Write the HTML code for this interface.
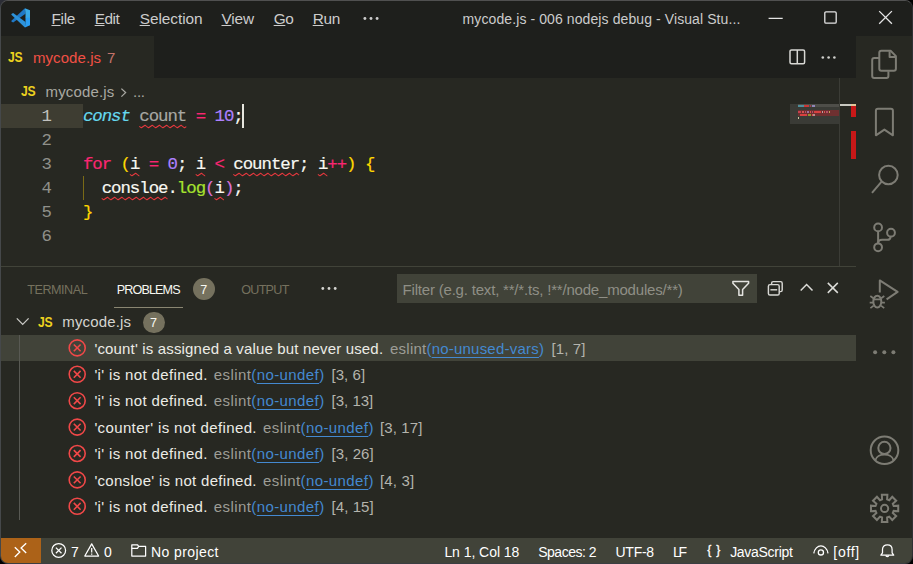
<!DOCTYPE html>
<html lang="en">
<head>
<meta charset="utf-8">
<title>mycode.js - 006 nodejs debug - Visual Studio Code</title>
<style>
html,body{margin:0;padding:0;}
body{width:913px;height:564px;overflow:hidden;background:#000;position:relative;font-family:"Liberation Sans",sans-serif;}
#cornerTL{position:absolute;left:0;top:0;width:10px;height:10px;background:#2b2d35;}
#win{position:absolute;left:0;top:0;width:911px;height:562px;border:1px solid #3a3e42;border-top-color:#505050;border-left-color:#45484a;border-right-color:#2f3034;border-radius:8px;overflow:hidden;background:#272822;}
.abs{position:absolute;}
.t{position:absolute;white-space:pre;line-height:20px;font-family:"Liberation Sans",sans-serif;}
.t u{text-decoration:underline;text-underline-offset:1px;text-decoration-thickness:1px;}
.t span u{text-underline-offset:3.4px;text-decoration-thickness:1.2px;}
svg{position:absolute;overflow:visible;}
.code{position:absolute;left:82.9px;white-space:pre;font-family:"Liberation Mono",monospace;font-size:17.4px;letter-spacing:-1.04px;line-height:24px;height:24px;color:#f8f8f2;-webkit-text-stroke:0.18px currentColor;}
.ln{position:absolute;left:20px;width:30.8px;text-align:right;white-space:pre;font-family:"Liberation Mono",monospace;font-size:17.4px;letter-spacing:-1.04px;line-height:24px;height:24px;color:#90908a;}
.k{color:#f92672}.y{color:#ffd700}.p{color:#ae81ff}.g{color:#a6e22e}.m{color:#da70d6}.c{color:#66d9ef;font-style:italic}.f{color:#a7a7a3}
.js{font-size:14px;font-weight:bold;color:#ecd21f;transform:scaleX(0.87);transform-origin:0 0;letter-spacing:-0.2px;}
</style>
</head>
<body>
<div id="cornerTL"></div>
<div id="win">
<!-- offsets inside #win are page coords minus 1 -->
<div class="abs" id="page" style="left:-1px;top:-1px;width:913px;height:564px;">

<!-- title bar -->
<div class="abs" style="left:0;top:0;width:913px;height:36px;background:#1e1f1c;"></div>
<!-- tabs container -->
<div class="abs" style="left:0;top:36px;width:856px;height:42px;background:#1e1f1c;"></div>
<div class="abs" style="left:0;top:36px;width:154px;height:42px;background:#272822;"></div>
<!-- editor bg is default -->
<!-- line highlight (gutter) -->
<div class="abs" style="left:0;top:104px;width:83px;height:24px;background:#3e3d32;"></div>

<!-- VS Code logo -->
<svg style="left:10.7px;top:7.7px;" width="19.6" height="19.6" viewBox="0 0 100 100">
  <path d="M2 65 L71 1 L74 29 L11 74 L2 69 Z" fill="#1f78c6"/>
  <path d="M2 31 L11 26 L74 71 L71 99 L2 35 Z" fill="#2d92da"/>
  <path d="M71 1 L97 12 L97 51 L74 51 L74 29 Z" fill="#39a9e6"/>
  <path d="M74 50 L97 50 L97 88 L71 99 L74 71 Z" fill="#2a9df2"/>
</svg>

<!-- menu dots -->
<svg style="left:363px;top:16px;" width="16" height="5" viewBox="0 0 16 5"><circle cx="1.9" cy="2.5" r="1.45" fill="#ccc"/><circle cx="8" cy="2.5" r="1.45" fill="#ccc"/><circle cx="14.1" cy="2.5" r="1.45" fill="#ccc"/></svg>

<!-- window controls -->
<svg style="left:768px;top:10px;" width="130" height="16" viewBox="0 0 130 16" fill="none" stroke="#e4e4e4" stroke-width="1.3">
  <path d="M0.6 8.3 H14.7"/>
  <rect x="56.8" y="1.9" width="11.4" height="11.3" rx="1.2"/>
  <path d="M111.2 1.1 L123.9 13.8 M123.9 1.1 L111.2 13.8"/>
</svg>

<!-- editor actions: split + more -->
<svg style="left:789px;top:49px;" width="17" height="16" viewBox="0 0 17 16" fill="none" stroke="#d8d8d4" stroke-width="1.5">
  <rect x="1" y="0.9" width="14.6" height="13.8" rx="1.5"/><path d="M8.3 1 V14.6"/>
</svg>
<svg style="left:821px;top:55px;" width="16" height="5" viewBox="0 0 16 5"><circle cx="1.8" cy="2.5" r="1.3" fill="#d0d0cc"/><circle cx="7.6" cy="2.5" r="1.3" fill="#d0d0cc"/><circle cx="13.4" cy="2.5" r="1.3" fill="#d0d0cc"/></svg>


<!-- JS file icons -->
<span class="t js" style="left:8.2px;top:47.1px;">JS</span>
<span class="t js" style="left:21.1px;top:81.1px;">JS</span>
<span class="t js" style="left:38.2px;top:312.1px;">JS</span>
<!-- breadcrumb chevron -->
<svg style="left:120px;top:87px;" width="8" height="11" viewBox="0 0 8 11" fill="none" stroke="#a9a9a3" stroke-width="1.3"><path d="M1.4 1.6 L5.6 5.6 L1.4 9.6"/></svg>

<!-- code -->
<div class="ln" style="top:104.7px;color:#c2c2bf;">1</div>
<div class="ln" style="top:128.7px;">2</div>
<div class="ln" style="top:152.7px;">3</div>
<div class="ln" style="top:176.7px;">4</div>
<div class="ln" style="top:200.7px;">5</div>
<div class="ln" style="top:224.7px;">6</div>
<div class="code" style="top:104.7px;"><span class="c">const</span> <span class="f">count</span> <span class="k">=</span> <span class="p">10</span>;</div>
<div class="code" style="top:152.7px;"><span class="k">for</span> <span class="y">(</span>i <span class="k">=</span> <span class="p">0</span>; i <span class="k">&lt;</span> counter; i<span class="k">++</span><span class="y">)</span> <span class="y">{</span></div>
<div class="code" style="top:176.7px;">  consloe.<span class="g">log</span><span class="m">(</span>i<span class="m">)</span>;</div>
<div class="code" style="top:200.7px;"><span class="y">}</span></div>
<!-- cursor -->
<div class="abs" style="left:242px;top:104px;width:2px;height:24px;background:#e6e6de;"></div>
<!-- indent guide (active bracket) -->
<div class="abs" style="left:83px;top:176px;width:1px;height:24px;background:#7a6a16;"></div>

<svg style="left:0;top:0;" width="913" height="564" viewBox="0 0 913 564" fill="none" stroke="#e8383e" stroke-width="1.05" stroke-linejoin="round">
<path d="M139.30 126.32 L141.34 127.80 L145.06 125.20 L146.50 126.32 L148.54 127.80 L152.26 125.20 L153.70 126.32 L155.74 127.80 L159.46 125.20 L160.90 126.32 L162.94 127.80 L166.66 125.20 L168.10 126.32 L170.14 127.80 L173.86 125.20 L175.30 126.32 L177.34 127.80 L181.06 125.20 L182.50 126.32 L184.54 127.80 L186.30 126.57"/>
<path d="M129.90 174.32 L131.94 175.80 L135.66 173.20 L137.10 174.32 L139.14 175.80 L139.30 175.69"/>
<path d="M195.70 174.32 L197.74 175.80 L201.46 173.20 L202.90 174.32 L204.94 175.80 L205.10 175.69"/>
<path d="M233.30 174.32 L235.34 175.80 L239.06 173.20 L240.50 174.32 L242.54 175.80 L246.26 173.20 L247.70 174.32 L249.74 175.80 L253.46 173.20 L254.90 174.32 L256.94 175.80 L260.66 173.20 L262.10 174.32 L264.14 175.80 L267.86 173.20 L269.30 174.32 L271.34 175.80 L275.06 173.20 L276.50 174.32 L278.54 175.80 L282.26 173.20 L283.70 174.32 L285.74 175.80 L289.46 173.20 L290.90 174.32 L292.94 175.80 L296.66 173.20 L298.10 174.32 L299.10 175.04"/>
<path d="M317.90 174.32 L319.94 175.80 L323.66 173.20 L325.10 174.32 L327.14 175.80 L327.30 175.69"/>
<path d="M101.70 198.32 L103.74 199.80 L107.46 197.20 L108.90 198.32 L110.94 199.80 L114.66 197.20 L116.10 198.32 L118.14 199.80 L121.86 197.20 L123.30 198.32 L125.34 199.80 L129.06 197.20 L130.50 198.32 L132.54 199.80 L136.26 197.20 L137.70 198.32 L139.74 199.80 L143.46 197.20 L144.90 198.32 L146.94 199.80 L150.66 197.20 L152.10 198.32 L154.14 199.80 L157.86 197.20 L159.30 198.32 L161.34 199.80 L165.06 197.20 L166.50 198.32 L167.50 199.04"/>
<path d="M214.50 198.32 L216.54 199.80 L220.26 197.20 L221.70 198.32 L223.74 199.80 L223.90 199.69"/>
</svg>

<!-- minimap -->
<div class="abs" style="left:790px;top:104px;width:49px;height:20px;background:#3a3b36;"></div>
<div class="abs" style="left:798px;top:104px;width:41px;height:3px;background:#4e4e49;"></div>
<div class="abs" style="left:798px;top:110px;width:41px;height:6px;background:#6e3030;"></div>
<div class="abs" style="left:798px;top:104.5px;width:5.5px;height:2px;background:#4f8f9c;"></div>
<div class="abs" style="left:804px;top:104.5px;width:5px;height:2px;background:#c83838;"></div>
<div class="abs" style="left:810px;top:104.5px;width:1px;height:2px;background:#a04050;"></div>
<div class="abs" style="left:812px;top:104.5px;width:3px;height:2px;background:#8f86b8;"></div>
<div class="abs" style="left:798px;top:110.5px;width:3px;height:2px;background:#c8404e;"></div>
<div class="abs" style="left:802px;top:110.5px;width:1.5px;height:2px;background:#d85050;"></div>
<div class="abs" style="left:805px;top:110.5px;width:1px;height:2px;background:#b05068;"></div>
<div class="abs" style="left:807px;top:110.5px;width:1.5px;height:2px;background:#a070a0;"></div>
<div class="abs" style="left:810px;top:110.5px;width:1px;height:2px;background:#d85050;"></div>
<div class="abs" style="left:812px;top:110.5px;width:1px;height:2px;background:#b05068;"></div>
<div class="abs" style="left:814px;top:110.5px;width:7px;height:2.4px;background:#d84040;"></div>
<div class="abs" style="left:822px;top:110.5px;width:1px;height:2px;background:#c0a0a0;"></div>
<div class="abs" style="left:824px;top:110.5px;width:1.2px;height:2.4px;background:#d85050;"></div>
<div class="abs" style="left:826px;top:110.5px;width:2px;height:2px;background:#b05068;"></div>
<div class="abs" style="left:829px;top:110.5px;width:1px;height:2px;background:#c0a050;"></div>
<div class="abs" style="left:800px;top:113.5px;width:7px;height:2.4px;background:#d84040;"></div>
<div class="abs" style="left:807.5px;top:113.5px;width:3.5px;height:2px;background:#98902e;"></div>
<div class="abs" style="left:811.5px;top:113.5px;width:1px;height:2.4px;background:#d85050;"></div>
<div class="abs" style="left:813px;top:113.5px;width:1.5px;height:2px;background:#b88a8a;"></div>
<div class="abs" style="left:798px;top:116.5px;width:1px;height:2px;background:#c8c8a0;"></div>
<!-- overview ruler -->
<div class="abs" style="left:839px;top:78px;width:1px;height:188px;background:#3b3c36;"></div>
<div class="abs" style="left:840px;top:104px;width:16px;height:2px;background:#c8c8c0;"></div>
<div class="abs" style="left:850.5px;top:104px;width:5.5px;height:2px;background:#e0c89a;"></div>
<div class="abs" style="left:850.5px;top:106px;width:5.5px;height:11px;background:#c81818;"></div>
<div class="abs" style="left:850.5px;top:131px;width:5.5px;height:28px;background:#c81818;"></div>

<!-- panel -->
<div class="abs" style="left:0;top:266px;width:856px;height:1px;background:#414339;"></div>
<div class="abs" style="left:114px;top:307px;width:69px;height:1px;background:#8a8672;"></div>
<div class="abs" style="left:193px;top:278px;width:22px;height:22px;border-radius:11px;background:#75715e;"></div>
<svg style="left:321px;top:286px;" width="16" height="5" viewBox="0 0 16 5"><circle cx="1.8" cy="2.5" r="1.4" fill="#d4d4d0"/><circle cx="8" cy="2.5" r="1.4" fill="#d4d4d0"/><circle cx="14.2" cy="2.5" r="1.4" fill="#d4d4d0"/></svg>
<div class="abs" style="left:397px;top:274px;width:360px;height:29px;background:#414339;"></div>
<!-- filter icon -->
<svg style="left:732px;top:280px;" width="18" height="17" viewBox="0 0 18 17" fill="none" stroke="#e4e4e0" stroke-width="1.5" stroke-linejoin="round"><path d="M0.9 1.6 H16.6 V3.2 L10.6 9.6 V15.2 H6.9 V9.6 L0.9 3.2 Z"/></svg>
<!-- collapse all -->
<svg style="left:767px;top:280px;" width="17" height="17" viewBox="0 0 17 17" fill="none" stroke="#d8d8d4" stroke-width="1.45"><path d="M4.6 4.4 V3.2 Q4.6 1.6 6.2 1.6 H13.6 Q15.2 1.6 15.2 3.2 V10 Q15.2 11.6 13.6 11.6 H12.4"/><rect x="1.4" y="4.6" width="10.8" height="10.4" rx="1.6"/><path d="M3.4 9.8 H10.2"/></svg>
<!-- chevron up -->
<svg style="left:800px;top:283px;" width="14" height="9" viewBox="0 0 14 9" fill="none" stroke="#dcdcd8" stroke-width="1.5"><path d="M0.7 7.6 L6.6 1.5 L12.5 7.6"/></svg>
<!-- close -->
<svg style="left:827px;top:282px;" width="12" height="12" viewBox="0 0 12 12" fill="none" stroke="#dcdcd8" stroke-width="1.5"><path d="M0.8 0.9 L10.8 10.9 M10.8 0.9 L0.8 10.9"/></svg>

<!-- tree -->
<div class="abs" style="left:0;top:335px;width:856px;height:26px;background:#414339;"></div>
<div class="abs" style="left:19px;top:335px;width:1px;height:185px;background:#585953;"></div>
<svg style="left:16px;top:317px;" width="14" height="9" viewBox="0 0 14 9" fill="none" stroke="#c8c8c4" stroke-width="1.3"><path d="M0.8 1.4 L6.7 7.4 L12.6 1.4"/></svg>
<div class="abs" style="left:143px;top:311.5px;width:21.5px;height:21.5px;border-radius:11px;background:#75715e;"></div>
<svg style="left:0;top:0;" width="913" height="564" viewBox="0 0 913 564" fill="none" stroke="#f04848" stroke-width="1.6">
<circle cx="77.2" cy="347.90" r="8"/><path d="M73.8 344.50 L80.60000000000001 351.30 M80.60000000000001 344.50 L73.8 351.30"/>
<circle cx="77.2" cy="374.30" r="8"/><path d="M73.8 370.90 L80.60000000000001 377.70 M80.60000000000001 370.90 L73.8 377.70"/>
<circle cx="77.2" cy="400.70" r="8"/><path d="M73.8 397.30 L80.60000000000001 404.10 M80.60000000000001 397.30 L73.8 404.10"/>
<circle cx="77.2" cy="427.10" r="8"/><path d="M73.8 423.70 L80.60000000000001 430.50 M80.60000000000001 423.70 L73.8 430.50"/>
<circle cx="77.2" cy="453.50" r="8"/><path d="M73.8 450.10 L80.60000000000001 456.90 M80.60000000000001 450.10 L73.8 456.90"/>
<circle cx="77.2" cy="479.90" r="8"/><path d="M73.8 476.50 L80.60000000000001 483.30 M80.60000000000001 476.50 L73.8 483.30"/>
<circle cx="77.2" cy="506.30" r="8"/><path d="M73.8 502.90 L80.60000000000001 509.70 M80.60000000000001 502.90 L73.8 509.70"/>
</svg>

<!-- status bar -->
<div class="abs" style="left:0;top:538px;width:913px;height:26px;background:#414339;"></div>
<div class="abs" style="left:0;top:538px;width:41px;height:26px;background:#ac6218;"></div>
<svg style="left:0;top:0;" width="60" height="564" viewBox="0 0 60 564" fill="none" stroke="#fff" stroke-width="1.35"><path d="M14.8 547.2 L19.8 552.1 L14.8 557"/><path d="M26.2 543.2 L21.1 548 L26.2 552.9"/></svg>
<!-- error/warn -->
<svg style="left:50px;top:543px;" width="17" height="17" viewBox="0 0 17 17" fill="none" stroke="#fff" stroke-width="1.25"><circle cx="8.7" cy="7.4" r="6.9"/><path d="M5.9 4.6 L11.5 10.2 M11.5 4.6 L5.9 10.2"/></svg>
<svg style="left:84px;top:543px;" width="16" height="15" viewBox="0 0 16 15" fill="none" stroke="#fff" stroke-width="1.25" stroke-linejoin="round"><path d="M7.7 0.9 L14.6 13 H0.8 Z"/><path d="M7.7 5 V9.4 M7.7 10.4 V11.8"/></svg>
<!-- folder -->
<svg style="left:131px;top:544px;" width="16" height="13" viewBox="0 0 16 13" fill="none" stroke="#fff" stroke-width="1.25" stroke-linejoin="round"><path d="M0.8 0.9 H6.6 L7.6 2.4 H14.6 V12 H0.8 Z"/><path d="M0.8 4.4 H6.4 L7.6 2.6"/></svg>
<!-- braces -->
<span class="t" style="left:707.2px;top:540.2px;font-size:12.2px;color:#fff;letter-spacing:4.9px;line-height:20px;-webkit-text-stroke:0.3px #fff;">{}</span>
<!-- eye -->
<svg style="left:813px;top:545px;" width="16" height="12" viewBox="0 0 16 12" fill="none" stroke="#fff" stroke-width="1.3"><path d="M0.8 8.4 C1.4 3.6 4.8 0.9 7.9 0.9 C11 0.9 14.4 3.6 15 8.4"/><circle cx="7.9" cy="7.4" r="2.6"/></svg>
<!-- bell -->
<svg style="left:880px;top:544px;" width="15" height="14" viewBox="0 0 15 14" fill="none" stroke="#fff" stroke-width="1.25" stroke-linejoin="round"><path d="M0.9 11.2 L2.5 8.8 V5.6 C2.5 2.6 4.6 0.8 7.3 0.8 C10 0.8 12.1 2.6 12.1 5.6 V8.8 L13.7 11.2 Z"/><path d="M5.9 11.4 C6 13 8.6 13 8.7 11.4"/></svg>

<!-- activity bar -->
<svg style="left:0;top:0;" width="913" height="564" viewBox="0 0 913 564" fill="none" stroke="#7d7c74" stroke-width="2" stroke-linejoin="round">
<path d="M881.3 50.8 H890.6 L895.9 56.1 V68.8 Q895.9 70.8 893.9 70.8 H881.3 Q879.3 70.8 879.3 68.8 V52.8 Q879.3 50.8 881.3 50.8 Z"/>
<path d="M889.6 51.2 V56.9 H895.6"/>
<path d="M879 57.9 H874.2 Q872.2 57.9 872.2 59.9 V75.9 Q872.2 77.9 874.2 77.9 H886.4 Q888.4 77.9 888.4 75.9 V71.2"/>
<path d="M877.9 108.8 H890.9 Q892.9 108.8 892.9 110.8 V135.3 L884.4 129.6 L875.9 135.3 V110.8 Q875.9 108.8 877.9 108.8 Z"/>
<circle cx="888.4" cy="175" r="9.3"/><path d="M881.6 181.6 L872 192.8"/>
<circle cx="878.1" cy="227.4" r="3.9"/><circle cx="878.1" cy="247.3" r="3.9"/><circle cx="891" cy="232.7" r="3.9"/>
<path d="M878.1 231.4 V243.3"/><path d="M890.6 236.8 Q890.2 239.8 887.6 239.8 H882 Q878.4 239.8 878.1 243"/>
<path d="M879.8 292.4 V280.4 L897.6 291.9 L886.6 299.4"/>
<ellipse cx="877.3" cy="301.6" rx="4" ry="5.9" stroke-width="2"/>
<path stroke-width="1.7" d="M873.6 299.4 H881 M873.4 298.3 L870.3 296 M873.3 302.6 H869.7 M873.6 305.6 L870.4 308.2 M881.2 298.3 L884.3 296 M881.3 302.6 H884.9 M881 305.6 L884.2 308.2"/>
<circle cx="875.1" cy="352.3" r="2" fill="#7d7c74" stroke="none"/>
<circle cx="884.3" cy="352.3" r="2" fill="#7d7c74" stroke="none"/>
<circle cx="893.4" cy="352.3" r="2" fill="#7d7c74" stroke="none"/>
<circle cx="884.5" cy="450.3" r="13.8"/><circle cx="884.4" cy="447.9" r="6.1"/>
<path d="M875.3 460.4 C877 452.6 892 452.6 893.6 460.4"/>
<path d="M882.09 499.34 L881.83 494.78 L887.37 494.78 L887.11 499.34 L889.23 500.22 L892.27 496.81 L896.19 500.73 L892.78 503.77 L893.66 505.89 L898.22 505.63 L898.22 511.17 L893.66 510.91 L892.78 513.03 L896.19 516.07 L892.27 519.99 L889.23 516.58 L887.11 517.46 L887.37 522.02 L881.83 522.02 L882.09 517.46 L879.97 516.58 L876.93 519.99 L873.01 516.07 L876.42 513.03 L875.54 510.91 L870.98 511.17 L870.98 505.63 L875.54 505.89 L876.42 503.77 L873.01 500.73 L876.93 496.81 L879.97 500.22 Z" stroke-linejoin="miter"/>
<circle cx="884.6" cy="508.4" r="3.6"/>
</svg>

<span class="t" id="t0" style="left:51.49px;top:8.66px;font-size:15.4px;color:#cccccc;letter-spacing:-0.320px;"><u>F</u>ile</span>
<span class="t" id="t1" style="left:94.68px;top:8.66px;font-size:15.4px;color:#cccccc;letter-spacing:-0.452px;"><u>E</u>dit</span>
<span class="t" id="t2" style="left:139.67px;top:8.66px;font-size:15.4px;color:#cccccc;letter-spacing:-0.038px;"><u>S</u>election</span>
<span class="t" id="t3" style="left:221.50px;top:8.66px;font-size:15.4px;color:#cccccc;letter-spacing:-0.149px;"><u>V</u>iew</span>
<span class="t" id="t4" style="left:273.67px;top:8.66px;font-size:15.4px;color:#cccccc;letter-spacing:-0.315px;"><u>G</u>o</span>
<span class="t" id="t5" style="left:312.68px;top:8.66px;font-size:15.4px;color:#cccccc;letter-spacing:-0.313px;"><u>R</u>un</span>
<span class="t" id="t6" style="left:462.61px;top:9.15px;font-size:14px;color:#cccccc;letter-spacing:0.094px;">mycode.js - 006 nodejs debug - Visual Stu...</span>
<span class="t" id="t7" style="left:32.97px;top:47.80px;font-size:15px;color:#f15045;letter-spacing:0.073px;">mycode.js</span>
<span class="t" id="t8" style="left:106.96px;top:47.80px;font-size:15px;color:#c4736b;letter-spacing:0.000px;">7</span>
<span class="t" id="t9" style="left:45.51px;top:81.80px;font-size:15px;color:#a9a9a3;letter-spacing:0.146px;">mycode.js</span>
<span class="t" id="t10" style="left:133.00px;top:81.80px;font-size:15px;color:#a9a9a3;letter-spacing:-0.255px;">...</span>
<span class="t" id="t11" style="left:27.25px;top:279.63px;font-size:12.6px;color:#75715e;letter-spacing:-0.467px;">TERMINAL</span>
<span class="t" id="t12" style="left:116.81px;top:279.63px;font-size:12.6px;color:#f8f8f2;letter-spacing:-0.893px;">PROBLEMS</span>
<span class="t" id="t13" style="left:241.28px;top:279.63px;font-size:12.6px;color:#75715e;letter-spacing:-0.743px;">OUTPUT</span>
<span class="t" id="t14" style="left:200.25px;top:279.63px;font-size:12.6px;color:#f8f8f2;letter-spacing:0.000px;">7</span>
<span class="t" id="t15" style="left:402.56px;top:280.00px;font-size:15px;color:#8f8f86;letter-spacing:-0.193px;">Filter (e.g. text, **/*.ts, !**/node_modules/**)</span>
<span class="t" id="t16" style="left:62.24px;top:311.80px;font-size:15px;color:#d4d4cf;letter-spacing:0.168px;">mycode.js</span>
<span class="t" id="t17" style="left:150.05px;top:313.03px;font-size:12.6px;color:#f8f8f2;letter-spacing:0.000px;">7</span>
<span class="t" id="t18" style="left:94.38px;top:338.50px;font-size:15px;color:#ecece6;letter-spacing:0.165px;">'count' is assigned a value but never used.</span>
<span class="t" id="t19" style="left:390.07px;top:338.50px;font-size:15px;color:#9d9d96;letter-spacing:0.220px;">eslint<span style="color:#4489d0">(<u>no-unused-vars</u>)</span></span>
<span class="t" id="t20" style="left:551.38px;top:338.50px;font-size:15px;color:#b4b4ad;letter-spacing:0.123px;">[1, 7]</span>
<span class="t" id="t21" style="left:94.38px;top:364.90px;font-size:15px;color:#ecece6;letter-spacing:0.359px;">'i' is not defined.</span>
<span class="t" id="t22" style="left:213.83px;top:364.90px;font-size:15px;color:#9d9d96;letter-spacing:0.407px;">eslint<span style="color:#4489d0">(<u>no-undef</u>)</span></span>
<span class="t" id="t23" style="left:331.57px;top:364.90px;font-size:15px;color:#b4b4ad;letter-spacing:0.026px;">[3, 6]</span>
<span class="t" id="t24" style="left:94.38px;top:391.30px;font-size:15px;color:#ecece6;letter-spacing:0.359px;">'i' is not defined.</span>
<span class="t" id="t25" style="left:213.83px;top:391.30px;font-size:15px;color:#9d9d96;letter-spacing:0.407px;">eslint<span style="color:#4489d0">(<u>no-undef</u>)</span></span>
<span class="t" id="t26" style="left:331.57px;top:391.30px;font-size:15px;color:#b4b4ad;letter-spacing:0.002px;">[3, 13]</span>
<span class="t" id="t27" style="left:94.38px;top:417.70px;font-size:15px;color:#ecece6;letter-spacing:0.367px;">'counter' is not defined.</span>
<span class="t" id="t28" style="left:263.02px;top:417.70px;font-size:15px;color:#9d9d96;letter-spacing:0.410px;">eslint<span style="color:#4489d0">(<u>no-undef</u>)</span></span>
<span class="t" id="t29" style="left:380.00px;top:417.70px;font-size:15px;color:#b4b4ad;letter-spacing:0.125px;">[3, 17]</span>
<span class="t" id="t30" style="left:94.38px;top:444.10px;font-size:15px;color:#ecece6;letter-spacing:0.359px;">'i' is not defined.</span>
<span class="t" id="t31" style="left:213.83px;top:444.10px;font-size:15px;color:#9d9d96;letter-spacing:0.407px;">eslint<span style="color:#4489d0">(<u>no-undef</u>)</span></span>
<span class="t" id="t32" style="left:331.57px;top:444.10px;font-size:15px;color:#b4b4ad;letter-spacing:0.058px;">[3, 26]</span>
<span class="t" id="t33" style="left:94.38px;top:470.50px;font-size:15px;color:#ecece6;letter-spacing:0.296px;">'consloe' is not defined.</span>
<span class="t" id="t34" style="left:263.02px;top:470.50px;font-size:15px;color:#9d9d96;letter-spacing:0.410px;">eslint<span style="color:#4489d0">(<u>no-undef</u>)</span></span>
<span class="t" id="t35" style="left:380.00px;top:470.50px;font-size:15px;color:#b4b4ad;letter-spacing:0.149px;">[4, 3]</span>
<span class="t" id="t36" style="left:94.38px;top:496.90px;font-size:15px;color:#ecece6;letter-spacing:0.359px;">'i' is not defined.</span>
<span class="t" id="t37" style="left:213.83px;top:496.90px;font-size:15px;color:#9d9d96;letter-spacing:0.407px;">eslint<span style="color:#4489d0">(<u>no-undef</u>)</span></span>
<span class="t" id="t38" style="left:331.57px;top:496.90px;font-size:15px;color:#b4b4ad;letter-spacing:0.058px;">[4, 15]</span>
<span class="t" id="t39" style="left:71.10px;top:542.15px;font-size:14px;color:#ffffff;letter-spacing:0.000px;">7</span>
<span class="t" id="t40" style="left:104.09px;top:542.15px;font-size:14px;color:#ffffff;letter-spacing:0.000px;">0</span>
<span class="t" id="t41" style="left:151.10px;top:542.15px;font-size:14px;color:#ffffff;letter-spacing:0.401px;">No project</span>
<span class="t" id="t42" style="left:444.39px;top:542.15px;font-size:14px;color:#ffffff;letter-spacing:-0.052px;">Ln 1, Col 18</span>
<span class="t" id="t43" style="left:538.14px;top:542.15px;font-size:14px;color:#ffffff;letter-spacing:-0.468px;">Spaces: 2</span>
<span class="t" id="t44" style="left:615.50px;top:542.15px;font-size:14px;color:#ffffff;letter-spacing:-0.263px;">UTF-8</span>
<span class="t" id="t45" style="left:673.10px;top:542.15px;font-size:14px;color:#ffffff;letter-spacing:-2.298px;">LF</span>
<span class="t" id="t46" style="left:730.15px;top:542.15px;font-size:14px;color:#ffffff;letter-spacing:-0.290px;">JavaScript</span>
<span class="t" id="t47" style="left:833.34px;top:542.15px;font-size:14px;color:#ffffff;letter-spacing:0.701px;">[off]</span>
</div>
</div>
</body>
</html>
